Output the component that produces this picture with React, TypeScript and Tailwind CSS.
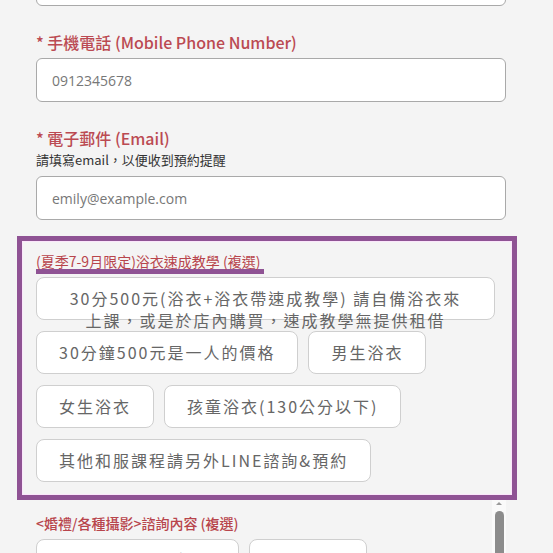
import React from "react";

const cjk = { fontFamily: '"Noto Sans CJK TC", "Noto Sans", sans-serif' };

function Chip({ children, className = "" }: { children: React.ReactNode; className?: string }) {
  return (
    <div
      className={
        "h-[43px] rounded-[8px] border border-[#cfcfcf] bg-white px-[22px] pt-[9px] text-center text-[16px] leading-[22px] tracking-[2px] text-[#666] whitespace-nowrap " +
        className
      }
      style={cjk}
    >
      {children}
    </div>
  );
}

export default function App() {
  return (
    <div className="relative h-[553px] w-[553px] overflow-hidden bg-[#f4f4f4]" style={cjk}>
      <div className="flex flex-col pl-[36px]">
        <div className="-mt-[38px] h-[44px] w-[470px] rounded-[6px] border border-[#a9a9a9] bg-white" />

        <div className="mt-[25px] text-[16px] font-medium leading-[22px] text-[#bb4a52]">
          * 手機電話 (Mobile Phone Number)
        </div>
        <div className="mt-[5px] flex h-[44px] w-[470px] items-center rounded-[6px] border border-[#a9a9a9] bg-white pl-[15px] text-[14px] text-[#777]" style={{ fontFamily: '"Open Sans", "Noto Sans CJK TC", sans-serif' }}>
          0912345678
        </div>

        <div className="mt-[25px] text-[16px] font-medium leading-[22px] text-[#bb4a52]">* 電子郵件 (Email)</div>
        <div className="mt-[1px] text-[13px] leading-[20px] text-[#333]">請填寫email，以便收到預約提醒</div>
        <div className="mt-[6px] flex h-[44px] w-[470px] items-center rounded-[6px] border border-[#a9a9a9] bg-white pl-[15px] text-[14px] text-[#777]" style={{ fontFamily: '"Open Sans", "Noto Sans CJK TC", sans-serif' }}>
          emily@example.com
        </div>

        <div className="-ml-[19px] mt-[16px] w-[500px] border-[5px] border-[#8f5394] pb-[2px] pl-[14px] pt-[12px] shadow-[inset_0_0_0_1px_#fbe6fb]">
          <div className="flex">
            <span className="border-b-[5px] border-[#8f5394] pr-[4px] text-[14px] leading-[16px] text-[#b8454c]">
              (夏季7-9月限定)浴衣速成教學 (複選)
            </span>
          </div>
          <div className="mt-[3px] flex flex-wrap gap-x-[10px] gap-y-[11px] pb-[11px]">
            <Chip className="w-[459px] !px-0">
              30分500元(浴衣+浴衣帶速成教學) 請自備浴衣來
              <br />
              上課，或是於店內購買，速成教學無提供租借
            </Chip>
            <Chip>30分鐘500元是一人的價格</Chip>
            <Chip>男生浴衣</Chip>
            <Chip>女生浴衣</Chip>
            <Chip>孩童浴衣(130公分以下)</Chip>
            <Chip>其他和服課程請另外LINE諮詢&amp;預約</Chip>
          </div>
        </div>

        <div className="mt-[13px] text-[14px] font-medium leading-[20px] text-[#b8454c]">&lt;婚禮/各種攝影&gt;諮詢內容 (複選)</div>
        <div className="mt-[6px] flex gap-x-[10px]">
          <Chip className="w-[203px]">婚禮紀錄/婚紗攝影</Chip>
          <Chip>全家福照</Chip>
        </div>
      </div>

      <div className="absolute left-[492px] top-[500px] flex h-[60px] w-[14px] flex-col items-center bg-[#fafafa]">
        <div className="mt-[2px] h-0 w-0 border-x-[3px] border-b-[3px] border-x-transparent border-b-[#9a9a9a]" />
        <div className="mt-[6px] h-[60px] w-[9px] rounded-full bg-[#8c8c8c]" />
      </div>
    </div>
  );
}
